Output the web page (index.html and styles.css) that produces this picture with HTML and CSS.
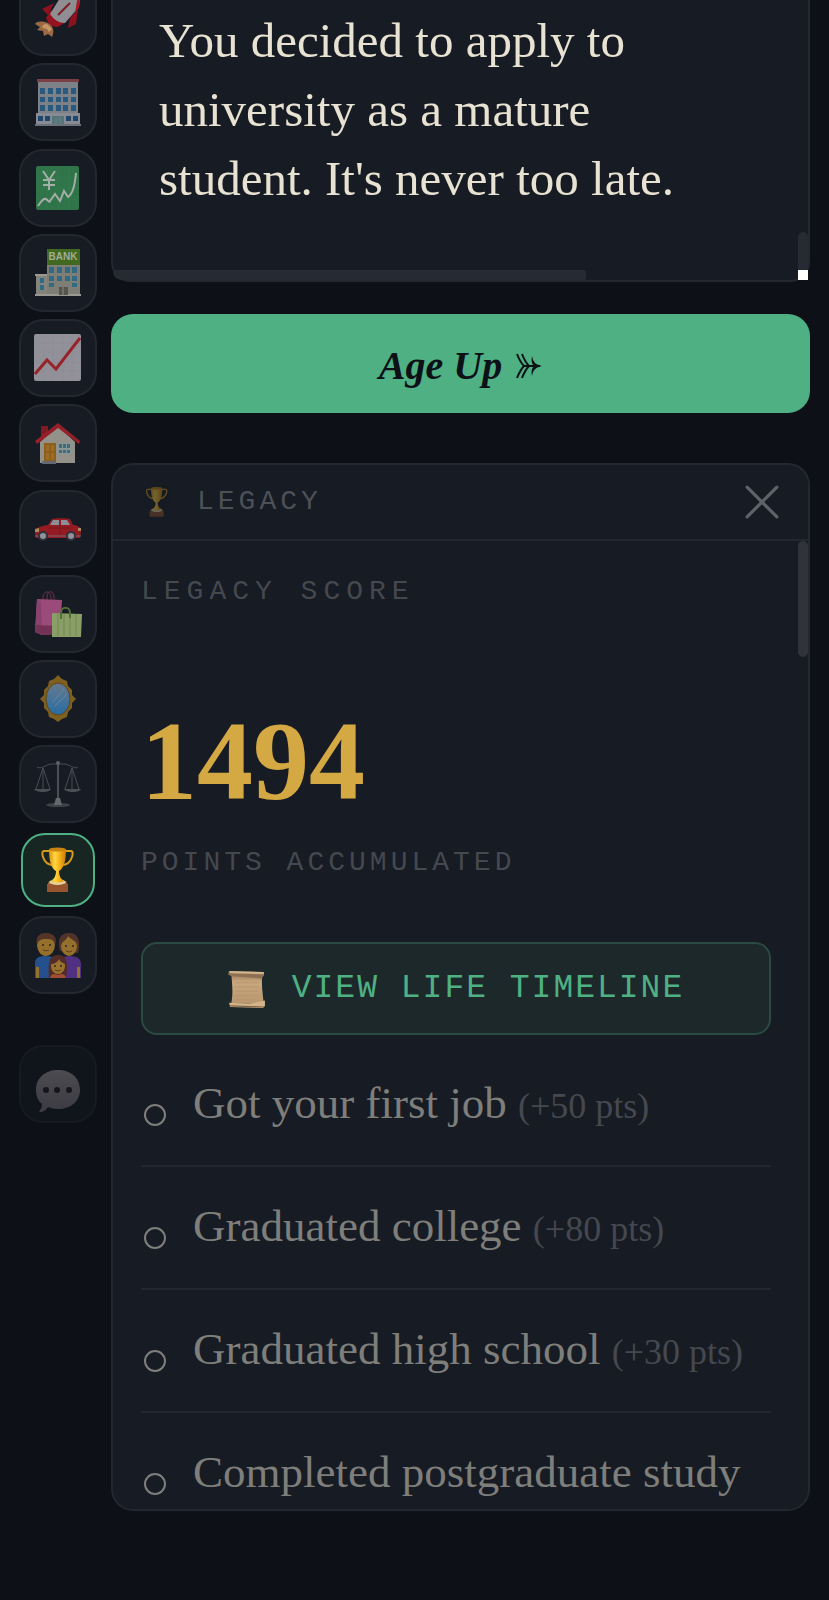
FILE: index.html
```html
<!DOCTYPE html>
<html lang="en">
<head>
    <meta charset="UTF-8">
    <meta name="viewport" content="width=device-width, initial-scale=1.0">
    <title>Legacy</title>
    <link rel="stylesheet" href="styles.css">
</head>
<body>
    <!-- Shared icons -->
    <svg class="icon-defs" aria-hidden="true">
        <defs>
            <linearGradient id="gold" x1="0" y1="0" x2="1" y2="0">
                <stop offset="0" stop-color="#d98f0c"/>
                <stop offset="0.35" stop-color="#ffd843"/>
                <stop offset="0.6" stop-color="#f8b41c"/>
                <stop offset="1" stop-color="#c77a08"/>
            </linearGradient>
            <linearGradient id="glass" x1="0" y1="0" x2="0" y2="1">
                <stop offset="0" stop-color="#66798e"/>
                <stop offset="1" stop-color="#276da3"/>
            </linearGradient>
            <linearGradient id="paper" x1="0" y1="0" x2="0" y2="1">
                <stop offset="0" stop-color="#9b7b59"/>
                <stop offset="0.3" stop-color="#c9a880"/>
                <stop offset="1" stop-color="#b8966e"/>
            </linearGradient>
            <linearGradient id="bubble" x1="0" y1="0" x2="0" y2="1">
                <stop offset="0" stop-color="#4b4b50"/>
                <stop offset="1" stop-color="#3c3b42"/>
            </linearGradient>
        </defs>
        <symbol id="trophy" viewBox="0 0 48 48">
            <path d="M16 5H10C8 5 8 8 9 11C11 17 15 19 19 19M31 5H37C39 5 39 8 38 11C36 17 32 19 28 19" fill="none" stroke="#d99a1c" stroke-width="2"/>
            <path d="M13 38H34V46H13Z" fill="#96542f"/>
            <path d="M14 38H33L32 35H15Z" fill="#b8733b"/>
            <ellipse cx="23.5" cy="36" rx="8" ry="3" fill="#e3d4a0"/>
            <path d="M15 3C15 15 17 22 22 25C22 30 20 33 17 35C20 37 27 37 30 35C27 33 25 30 25 25C30 22 32 15 32 3Z" fill="url(#gold)"/>
            <ellipse cx="23.5" cy="3.5" rx="8.5" ry="2" fill="#c98410"/>
        </symbol>
    </svg>

    <nav class="sidebar">
        <div class="nav-group">
            <button class="nav-btn" aria-label="Career">
                <svg viewBox="0 0 48 48">
                    <path d="M14 30C8 28 3 28 1 31L6 34L3 37L9 38L10 43L14 41L18 44C20 40 20 36 17 32Z" fill="#9a6a45"/>
                    <path d="M13 31C10 31 7 33 9 35L13 36L15 39L18 36Z" fill="#c99768"/>
                    <path d="M20 10L8 16L14 22ZM36 25L34 35L42 31L44 16Z" fill="#8c1220"/>
                    <path d="M17 17L12 25C14 31 18 34 24 34L32 29Z" fill="#97121f"/>
                    <path d="M26 5L16 21C20 27 25 30 31 30L45 14L46 4Z" fill="#8f8e92"/>
                    <path d="M36 10L24 22" stroke="#7d1c27" stroke-width="2"/>
                    <path d="M46 2L45 15L41 20L43 8Z" fill="#a81824"/>
                </svg>
            </button>
            <button class="nav-btn" aria-label="Office">
                <svg viewBox="0 0 48 48">
                    <path d="M4 4H44V36H4Z" fill="#7d8087"/>
                    <path d="M3 1H45V4H3Z" fill="#793f42"/>
                    <path d="M2 35H46V46H2Z" fill="#888b93"/>
                    <path d="M1 46H47V48H1Z" fill="#6d7179"/>
                    <g fill="#285a80">
                        <path d="M6 10h5v6h-5zM14 10h5v6h-5zM22 10h5v6h-5zM29 10h5v6h-5zM37 10h5v6h-5z"/>
                        <path d="M6 19h5v5h-5zM14 19h5v5h-5zM22 19h5v5h-5zM29 19h5v5h-5zM37 19h5v5h-5z"/>
                        <path d="M6 27h5v6h-5zM14 27h5v6h-5zM22 27h5v6h-5zM29 27h5v6h-5zM37 27h5v6h-5z"/>
                    </g>
                    <path d="M4 38h5v5h-5zM11 38h5v5h-5zM32 38h5v5h-5zM39 38h5v5h-5z" fill="#1e466f"/>
                    <path d="M18 38h12v8h-12z" fill="#547476"/>
                    <path d="M22 40v6M26 40v6" stroke="#6b8587"/>
                </svg>
            </button>
            <button class="nav-btn" aria-label="Investments">
                <svg viewBox="0 0 48 48">
                    <rect x="2" y="2" width="43" height="44" rx="2" fill="#30744a"/>
                    <path d="M2 14h43M2 24h43M2 35h43M13 2v44M24 2v44M35 2v44" stroke="#357a4f"/>
                    <path d="M9 7L15 16L21 7M15 16V26M9 16H21M9 21H21" fill="none" stroke="#a6aea8" stroke-width="2"/>
                    <path d="M4 42C8 36 10 34 12 35S15 39 16 37L21 30L26 37L30 27L34 33C39 30 41 20 42 9" fill="none" stroke="#a6aea8" stroke-width="2"/>
                </svg>
            </button>
            <button class="nav-btn" aria-label="Bank">
                <svg viewBox="0 0 48 48">
                    <path d="M13 16H46V47H13Z" fill="#7f7e76"/>
                    <path d="M2 26H13V47H2Z" fill="#85847c"/>
                    <path d="M1 25H13V27H1ZM1 45H47V47H1Z" fill="#9a9990"/>
                    <path d="M13 0H46V16H13Z" fill="#41691f"/>
                    <text class="bank-sign" x="29" y="11" text-anchor="middle">BANK</text>
                    <path d="M15 18h5v6h-5zM23 18h5v6h-5zM31 18h5v6h-5zM38 18h5v6h-5zM15 27h5v5h-5zM23 27h5v5h-5zM31 27h5v5h-5zM38 27h5v5h-5zM15 34h5v4h-5zM38 34h5v4h-5zM6 29h4v5h-4zM6 36h4v5h-4z" fill="#316a83"/>
                    <path d="M25 38h9v8h-9z" fill="#56544f"/>
                    <path d="M29 38v8" stroke="#8b8a83"/>
                </svg>
            </button>
            <button class="nav-btn" aria-label="Stocks">
                <svg viewBox="0 0 48 48">
                    <rect x="0" y="0" width="47" height="47" rx="2" fill="#929199"/>
                    <path d="M0 9h47M0 18h47M0 28h47M0 37h47M10 0v47M19 0v47M29 0v47M38 0v47" stroke="#8d8c95"/>
                    <path d="M1 40L13 26L22 35L46 4" fill="none" stroke="#98232a" stroke-width="3"/>
                </svg>
            </button>
            <button class="nav-btn" aria-label="Home">
                <svg viewBox="0 0 48 48">
                    <path d="M7 7H14V20H7Z" fill="#811b22"/>
                    <path d="M6 23L24 7L41 23V44H6Z" fill="#94918b"/>
                    <path d="M1 22L24 4L46 22L45 25L24 9L3 25Z" fill="#96202a"/>
                    <path d="M10 24H22V43H10Z" fill="#8c601c"/>
                    <path d="M12 26h3v6h-3zM17 26h3v6h-3zM12 34h3v7h-3zM17 34h3v7h-3z" fill="#9b6d22"/>
                    <path d="M24 24H37V35H24Z" fill="#8b9797"/>
                    <path d="M25 25h3v4h-3zM29 25h3v4h-3zM33 25h3v4h-3zM25 31h3v3h-3zM29 31h3v3h-3zM33 31h3v3h-3z" fill="#3f6c7c"/>
                    <path d="M8 42H22V45H8Z" fill="#656772"/>
                </svg>
            </button>
            <button class="nav-btn" aria-label="Vehicles">
                <svg viewBox="0 0 48 48">
                    <path d="M1 28C1 23 6 21 14 20L18 14C23 13 31 13 36 14L39 20C44 20 47 22 47 27L46 33H2Z" fill="#951b23"/>
                    <path d="M16 20L19 15H25V20ZM27 15H33L36 20H27Z" fill="#8c8f98"/>
                    <path d="M1 31H47" stroke="#75696c"/>
                    <path d="M1 24l4-1v4h-4zM44 23h3v3h-3z" fill="#ae8859"/>
                    <g fill="#92939a" stroke="#30333b" stroke-width="2">
                        <circle cx="9" cy="31" r="4"/>
                        <circle cx="37" cy="31" r="4"/>
                    </g>
                    <path d="M15 23H37M26 20V30" stroke="#751820"/>
                </svg>
            </button>
            <button class="nav-btn" aria-label="Shopping">
                <svg viewBox="0 0 48 48">
                    <path d="M9 14V8C9 0 17 0 17 8V13M13 13V7C13 0 20 0 20 7V13" fill="none" stroke="#73324f" stroke-width="1"/>
                    <path d="M3 9L28 10L26 44L8 45L1 42Z" fill="#9a4b79"/>
                    <path d="M3 9L7 12L8 45L1 42Z" fill="#87436d"/>
                    <path d="M2 35L26 36L26 44L8 45L1 42Z" fill="#743256"/>
                    <path d="M18 23L48 24L47 47H18Z" fill="#8a9f68"/>
                    <path d="M24 24V46M30 24V46M36 24V46M42 24V46" stroke="#7d925c" stroke-width="2"/>
                    <path d="M27 29V23C27 16 36 16 36 23V28" fill="none" stroke="#4f7133" stroke-width="2"/>
                </svg>
            </button>
            <button class="nav-btn" aria-label="Appearance">
                <svg viewBox="0 0 48 48">
                    <path d="M24 0L28 4L33 6L34 11L38 15L38 20L42 24L38 28L38 33L34 37L33 42L28 44L24 47L20 44L15 42L14 37L10 33L10 28L6 24L10 20L10 15L14 11L15 6L20 4Z" fill="#80601e"/>
                    <ellipse cx="24" cy="24" rx="12" ry="16" fill="url(#glass)" stroke="#5e451a"/>
                    <path d="M18 28L30 14M21 31L33 19" stroke="#6a859f"/>
                </svg>
            </button>
            <button class="nav-btn" aria-label="Law">
                <svg viewBox="0 0 48 48">
                    <g fill="none" stroke="#4a4d54">
                        <path d="M24 3V43" stroke-width="2"/>
                        <path d="M3 7C8 10 12 4 18 4H30C36 4 40 10 44 7" stroke-width="1"/>
                        <path d="M9 8L2 29M9 8L16 29M9 8V29M38 8L31 29M38 8L45 29M38 8V29" stroke-width="1"/>
                    </g>
                    <circle cx="24" cy="3" r="2" fill="#5e6168"/>
                    <path d="M0 29H17C16 33 2 33 0 29ZM30 29H47C46 33 32 33 30 29Z" fill="#4b4e55"/>
                    <ellipse cx="24" cy="45" rx="12" ry="2" fill="#3f4248"/>
                    <path d="M22 38H26L28 45H20Z" fill="#65676d"/>
                </svg>
            </button>
            <button class="nav-btn active" aria-label="Legacy">
                <svg viewBox="0 0 48 48"><use href="#trophy"/></svg>
            </button>
            <button class="nav-btn" aria-label="Family">
                <svg viewBox="0 0 48 48">
                    <path d="M1 47V32C1 26 6 25 12 25C19 25 22 28 22 33V47Z" fill="#24508d"/>
                    <path d="M26 47V33C26 28 29 25 35 25C42 25 47 27 47 33V47Z" fill="#503080"/>
                    <path d="M26 20C23 8 26 2 35 2C44 2 47 9 44 22Z" fill="#51332b"/>
                    <ellipse cx="12" cy="14" rx="9" ry="11" fill="#94702c"/>
                    <path d="M3 14C1 5 6 2 12 2C19 2 24 6 21 14C20 9 18 8 12 8C7 8 4 9 3 14Z" fill="#553528"/>
                    <ellipse cx="35" cy="15" rx="8" ry="10" fill="#94702c"/>
                    <path d="M27 14C28 10 32 10 34 5C37 9 42 9 43 14C46 6 41 3 35 3C29 3 25 7 27 14Z" fill="#51332b"/>
                    <path d="M15 47C14 34 14 24 24 24C34 24 34 34 32 47Z" fill="#542c27"/>
                    <ellipse cx="24" cy="35" rx="7" ry="8" fill="#9a742e"/>
                    <path d="M17 33C20 33 24 31 25 28C26 31 29 32 31 33C31 23 17 23 17 33Z" fill="#542c27"/>
                    <path d="M16 47C17 43 20 42 24 44C28 42 31 43 32 47Z" fill="#a14d32"/>
                    <path d="M2 47V36H5V47ZM43 47V36H46V47Z" fill="#94702c"/>
                    <g fill="#2f2520">
                        <circle cx="9" cy="14" r="1"/><circle cx="16" cy="14" r="1"/>
                        <circle cx="32" cy="15" r="1"/><circle cx="39" cy="15" r="1"/>
                        <circle cx="21" cy="35" r="1"/><circle cx="27" cy="35" r="1"/>
                    </g>
                    <path d="M9 19Q12 21 15 19M32 20Q35 22 38 20M21 39Q24 41 27 39" fill="none" stroke="#603c22"/>
                </svg>
            </button>
        </div>
        <button class="nav-btn muted" aria-label="Feedback">
            <svg viewBox="0 0 48 48">
                <path d="M24 10C11 10 2 18 2 30C2 37 5 42 8 44C8 48 6 50 5 52C10 52 12 50 14 47C17 48 20 49 24 49C37 49 46 41 46 30C46 18 37 10 24 10Z" fill="url(#bubble)"/>
                <g fill="#14161c">
                    <circle cx="12" cy="30" r="3"/>
                    <circle cx="23" cy="30" r="3"/>
                    <circle cx="35" cy="30" r="3"/>
                </g>
            </svg>
        </button>
    </nav>

    <main class="content">
        <section class="story">
            <p>You decided to apply to university as a mature student. It's never too late.</p>
            <div class="thumb-x"></div>
            <div class="thumb-y"></div>
            <div class="corner"></div>
        </section>

        <button class="age-up">
            Age Up
            <svg viewBox="0 0 26 26">
                <path d="M1 1C3 6 5 10 8 13C5 16 3 20 1 25M6 1C8 6 10 10 13 13C10 16 8 20 6 25M8 13H24"/>
                <path class="head" d="M16 3C17 9 20 12 26 13C20 14 17 17 16 23C15 18 16 15 18 13C16 11 15 8 16 3Z"/>
            </svg>
        </button>

        <section class="legacy">
            <header class="legacy-header">
                <svg class="header-icon" viewBox="0 0 48 48"><use href="#trophy"/></svg>
                <h2>LEGACY</h2>
                <button class="close" aria-label="Close">
                    <svg viewBox="0 0 32 32"><path d="M2 2L30 30M30 2L2 30"/></svg>
                </button>
            </header>
            <div class="legacy-body">
                <div class="thumb-score"></div>
                <h3 class="label score-label">LEGACY SCORE</h3>
                <div class="score">1494</div>
                <div class="label">POINTS ACCUMULATED</div>
                <button class="timeline-btn">
                    <svg viewBox="0 0 36 36">
                        <path d="M3 3H33C31 10 33 24 34 32H3C5 23 4 12 3 3Z" fill="url(#paper)"/>
                        <path d="M1 1L34 2L34 5L32 8L3 6L0 4Z" fill="#8d7051"/>
                        <path d="M1 1L34 2V4L2 3Z" fill="#d0b28c"/>
                        <path d="M1 31L20 32L35 29V34L33 36L2 35Z" fill="#d2b38a"/>
                        <path d="M2 34L34 35" stroke="#7c6045"/>
                        <path d="M7 12H29M7 16H29M7 20H29M7 24H29M7 28H25" stroke="#b8976f"/>
                    </svg>
                    VIEW LIFE TIMELINE
                </button>
                <ul class="milestones">
                    <li><span class="dot"></span><p>Got your first job <small>(+50 pts)</small></p></li>
                    <li><span class="dot"></span><p>Graduated college <small>(+80 pts)</small></p></li>
                    <li><span class="dot"></span><p>Graduated high school <small>(+30 pts)</small></p></li>
                    <li><span class="dot"></span><p>Completed postgraduate study</p></li>
                </ul>
            </div>
        </section>
    </main>
</body>
</html>
```
FILE: styles.css
```css
:root {
    --bg: #0d1017;
    --panel: #171b23;
    --border: #24272f;
    --thumb: #262a32;
    --green: #4eb083;
    --gold: #d4a843;
    --text: #e8e2d2;
    --text-dim: #7e7e7b;
    --text-faint: #45484f;
    --serif: "Liberation Serif", serif;
    --mono: "Liberation Mono", monospace;
}

* {
    box-sizing: border-box;
}

body {
    margin: 0;
    padding: 0 19px;
    display: flex;
    align-items: flex-start;
    gap: 14px;
    background-color: var(--bg);
    color: var(--text);
    font-family: var(--serif);
    overflow: hidden;
}

button {
    padding: 0;
    border: none;
    background: none;
    color: inherit;
    cursor: pointer;
}

h2, h3, p, ul {
    margin: 0;
    padding: 0;
    font-weight: normal;
}

.icon-defs {
    position: absolute;
    width: 0;
    height: 0;
}

/* Sidebar */
.sidebar {
    flex: none;
    width: 78px;
    margin-top: -22px;
}

.nav-group {
    display: flex;
    flex-direction: column;
    align-items: center;
    justify-content: space-between;
    height: 1016px;
    margin-bottom: 51px;
}

.nav-btn {
    display: flex;
    align-items: center;
    justify-content: center;
    width: 78px;
    height: 78px;
    border: 2px solid var(--border);
    border-radius: 24px;
    background-color: var(--panel);
}

.nav-btn svg {
    width: 48px;
    height: 48px;
    overflow: visible;
}

.nav-btn.active {
    width: 74px;
    height: 74px;
    margin: 2px 0;
    border-color: var(--green);
    background-color: #182623;
}

.nav-btn.muted {
    border-color: #171a21;
    background-color: #10141b;
}

.bank-sign {
    font: bold 10px "Liberation Sans", sans-serif;
    fill: #a3ad98;
}

/* Main column */
.content {
    flex: 1;
    min-width: 0;
    margin-top: -40px;
}

.story {
    position: relative;
    padding: 44px 46px 67px;
    border: 2px solid var(--border);
    border-radius: 20px;
    background-color: var(--panel);
    font-size: 49px;
    line-height: 69px;
}

.story p {
    max-width: 560px;
}

.thumb-x,
.thumb-y,
.corner,
.thumb-score {
    position: absolute;
    background-color: var(--thumb);
}

.thumb-x {
    left: 0;
    bottom: 0;
    width: 68%;
    height: 10px;
    border-radius: 4px 4px 4px 18px;
}

.thumb-y {
    right: 0;
    bottom: 10px;
    width: 10px;
    height: 38px;
    border-radius: 5px 5px 0 0;
}

.corner {
    right: 0;
    bottom: 0;
    width: 10px;
    height: 10px;
    background-color: #fff;
}

.age-up {
    display: flex;
    align-items: center;
    justify-content: center;
    gap: 14px;
    width: 100%;
    height: 99px;
    margin: 32px 0 50px;
    padding-top: 4px;
    border-radius: 22px;
    background-color: var(--green);
    color: #0d1117;
    font: italic bold 40px/60px var(--serif);
}

.age-up svg {
    width: 26px;
    height: 26px;
    fill: none;
    stroke: currentColor;
    stroke-width: 2;
}

.age-up .head {
    fill: currentColor;
    stroke: none;
}

/* Legacy panel */
.legacy {
    display: flex;
    flex-direction: column;
    height: 1048px;
    border: 2px solid var(--border);
    border-radius: 22px;
    background-color: var(--panel);
    overflow: hidden;
}

.legacy-header {
    flex: none;
    display: flex;
    align-items: center;
    height: 76px;
    padding: 0 28px;
    border-bottom: 2px solid var(--border);
}

.header-icon {
    width: 32px;
    height: 32px;
    margin-right: 24px;
    opacity: 0.4;
}

.legacy-header h2 {
    flex: 1;
    color: #4d5057;
    font: 28px/36px var(--mono);
    letter-spacing: 4px;
}

.close svg {
    display: block;
    width: 36px;
    height: 36px;
    padding: 1px;
    fill: none;
    stroke: #5f6269;
    stroke-width: 3;
    stroke-linecap: round;
}

.legacy-body {
    position: relative;
    padding: 33px 37px 0 28px;
}

.thumb-score {
    top: 0;
    right: 0;
    width: 10px;
    height: 116px;
    border-radius: 5px;
    background-color: #30333b;
}

.label {
    color: var(--text-faint);
    font: 28px/36px var(--mono);
    letter-spacing: 4px;
}

.score-label {
    letter-spacing: 6px;
}

.score {
    margin: 96px 0 29px;
    color: var(--gold);
    font-size: 112px;
    font-weight: bold;
    line-height: 110px;
}

.timeline-btn {
    display: flex;
    align-items: center;
    justify-content: center;
    gap: 26px;
    width: 100%;
    height: 93px;
    margin: 61px 0 9px;
    border: 2px solid #294b42;
    border-radius: 16px;
    background-color: #1d282b;
    color: var(--green);
    font: 33px/48px var(--mono);
    letter-spacing: 2px;
}

.timeline-btn svg {
    width: 38px;
    height: 38px;
}

.milestones {
    list-style: none;
}

.milestones li {
    display: flex;
    align-items: flex-start;
    gap: 27px;
    padding: 29px 0 32px 3px;
    border-bottom: 2px solid var(--border);
}

.milestones p {
    color: var(--text-dim);
    font-size: 45px;
    line-height: 60px;
    white-space: nowrap;
}

.milestones small {
    color: var(--text-faint);
    font-size: 36px;
    line-height: 36px;
}

.dot {
    flex: none;
    width: 22px;
    height: 22px;
    margin-top: 31px;
    border: 2px solid var(--text-dim);
    border-radius: 50%;
}
```
